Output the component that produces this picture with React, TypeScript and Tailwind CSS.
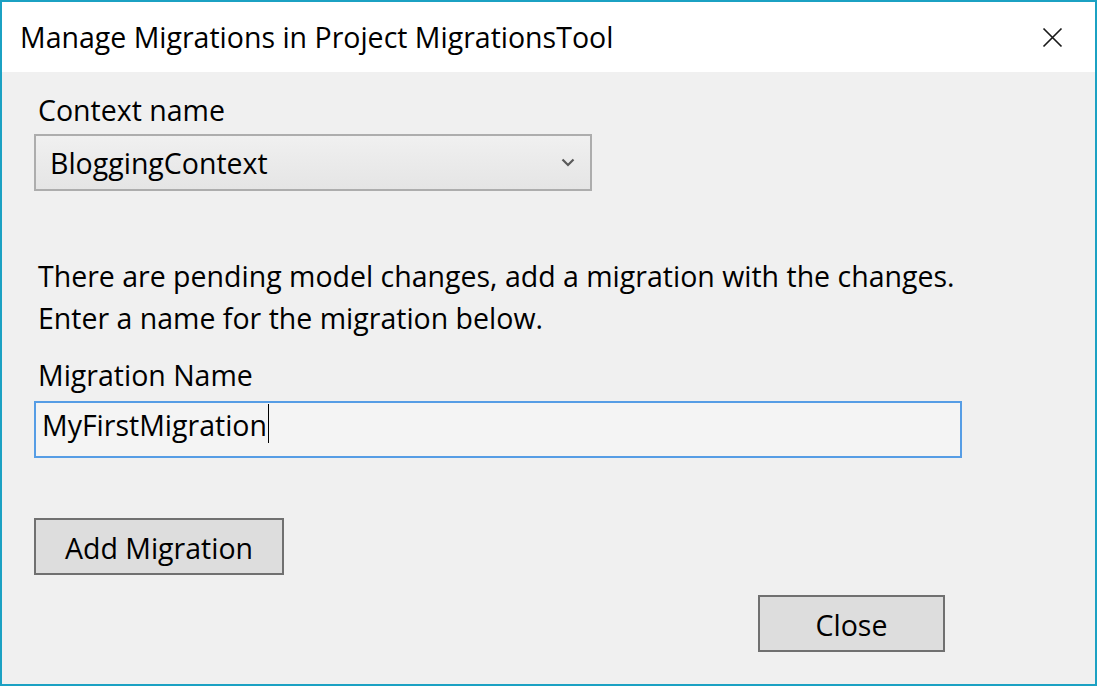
const font = { fontFamily: '"Segoe UI", "Open Sans", "Noto Sans", sans-serif' };

const ChevronDown = () => (
  <svg width="14" height="9" viewBox="0 0 14 9" fill="none">
    <path d="M1.5 1.5 L7 7 L12.5 1.5" stroke="#5a5a5a" strokeWidth="2.2" />
  </svg>
);

const CloseX = () => (
  <svg width="21" height="21" viewBox="0 0 21 21" fill="none">
    <path d="M1.5 1.5 L19.5 19.5 M19.5 1.5 L1.5 19.5" stroke="#1a1a1a" strokeWidth="1.7" />
  </svg>
);

const App = () => {
  return (
    <div
      className="w-[1097px] h-[686px] border-2 border-[#1ba1c3] bg-[#f0f0f0] flex flex-col text-[28.5px] text-black"
      style={font}
    >
      {/* title bar */}
      <div className="h-[70px] bg-white flex items-center justify-between pl-[18px] pr-[32px] shrink-0">
        <span className="leading-none">Manage Migrations in Project MigrationsTool</span>
        <CloseX />
      </div>

      <div className="flex flex-col pl-[32px] pr-[32px]">
        <label className="h-[40px] mt-[18px] pl-[4px] flex items-center">Context name</label>

        <div className="mt-[4px] w-[558px] h-[57px] border-2 border-[#adadad] bg-gradient-to-b from-[#f0f0f0] to-[#e5e5e5] flex items-center justify-between pl-[14px] pr-[15px]">
          <span className="leading-none pt-[2px]">BloggingContext</span>
          <ChevronDown />
        </div>

        <div className="mt-[64px] pl-[4px] leading-[42px]">
          <p>There are pending model changes, add a migration with the changes.</p>
          <p>Enter a name for the migration below.</p>
        </div>

        <label className="h-[40px] mt-[16px] pl-[4px] flex items-center">Migration Name</label>

        <div className="mt-[6px] w-[928px] h-[57px] border-2 border-[#569de5] bg-[#f4f4f4] flex items-start pl-[6px]">
          <span className="leading-none mt-[8px]">MyFirstMigration</span>
          <span className="w-px h-[39px] bg-black ml-px mt-px" />
        </div>

        <button className="mt-[60px] w-[250px] h-[57px] border-2 border-[#707070] bg-[#dddddd] flex items-center justify-center leading-none pt-[4px]">
          Add Migration
        </button>

        <div className="flex justify-end pr-[118px] mt-[20px]">
          <button className="w-[187px] h-[57px] border-2 border-[#707070] bg-[#dddddd] flex items-center justify-center leading-none pt-[4px]">
            Close
          </button>
        </div>
      </div>
    </div>
  );
};

export default App;
